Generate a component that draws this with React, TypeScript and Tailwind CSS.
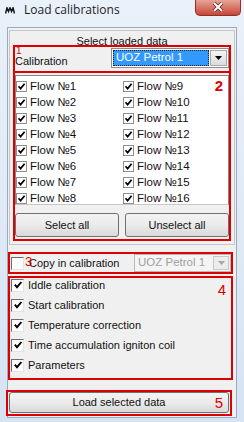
import React from "react";

const flowsLeft = ["Flow №1", "Flow №2", "Flow №3", "Flow №4", "Flow №5", "Flow №6", "Flow №7", "Flow №8"];
const flowsRight = ["Flow №9", "Flow №10", "Flow №11", "Flow №12", "Flow №13", "Flow №14", "Flow №15", "Flow №16"];
const dataItems = [
  "Iddle calibration",
  "Start calibration",
  "Temperature correction",
  "Time accumulation igniton coil",
  "Parameters",
];

// small flat checkbox used in the white list
function ListCheck({ label }: { label: string }) {
  return (
    <div className="flex h-4 items-center">
      <span className="flex h-[11px] w-[11px] items-center justify-center border border-[#8e8f8f] bg-white">
        <svg width="9" height="9" viewBox="0 0 9 9">
          <path d="M1.5 4.3 L3.6 6.6 L7.6 1.8" stroke="#000" strokeWidth="1.7" fill="none" />
        </svg>
      </span>
      <span className="ml-[3px] text-[11.5px] leading-4 text-[#111]">{label}</span>
    </div>
  );
}

// old style sunken checkbox
function OldCheck({ checked }: { checked: boolean }) {
  return (
    <span className="flex h-[13px] w-[13px] items-center justify-center border border-t-[#6d6d6d] border-l-[#6d6d6d] border-b-[#e3e3e3] border-r-[#e3e3e3] bg-white">
      {checked && (
        <svg width="10" height="10" viewBox="0 0 10 10">
          <path d="M1.8 4.6 L4 7.2 L8.4 2" stroke="#000" strokeWidth="1.9" fill="none" />
        </svg>
      )}
    </span>
  );
}

function WinButton({ children, className = "" }: { children: React.ReactNode; className?: string }) {
  return (
    <div
      className={
        "flex items-center justify-center rounded-[3px] border border-[#707070] bg-linear-to-b from-[#f3f3f3] via-[#ebebeb] to-[#d9d9d9] text-[11px] text-[#111] " +
        className
      }
    >
      {children}
    </div>
  );
}

function Badge({ n, className }: { n: string; className: string }) {
  return <span className={"absolute text-[#dd0000] " + className}>{n}</span>;
}

export default function App() {
  return (
    <div className="flex h-[422px] w-[244px] flex-col overflow-hidden bg-linear-to-b from-[#e9f1fa] to-[#d6e3f2] font-['Liberation_Sans',Arial,sans-serif]">
      {/* title bar */}
      <div className="flex h-[27px] items-start">
        <svg className="ml-[5px] mt-[7px]" width="10" height="7" viewBox="0 0 10 7">
          <path d="M0.5 6.5 L2 0.8 L3.5 4.5 L5 0.8 L6.5 4.5 L8 0.8 L9.5 6.5" stroke="#1a1a1a" strokeWidth="1.5" fill="none" />
        </svg>
        <span className="ml-[9px] mt-[2px] font-['Open_Sans',sans-serif] text-[12px] leading-4 text-[#1e1e1e]">
          Load calibrations
        </span>
        <div className="flex-1" />
        <div className="mr-[3px] -mt-[1px] flex h-[17px] w-[46px] items-center justify-center rounded-b-[5px] border border-t-0 border-[#8a3030] bg-linear-to-b from-[#e9a99c] via-[#d8786a] to-[#c74535]">
          <svg width="12" height="10" viewBox="0 0 12 10">
            <path d="M2 1 L10 9 M10 1 L2 9" stroke="#5a1e1e" strokeWidth="3.4" />
            <path d="M2 1 L10 9 M10 1 L2 9" stroke="#fff" strokeWidth="2" />
          </svg>
        </div>
      </div>

      {/* client area */}
      <div className="ml-[7px] flex h-[391px] w-[230px] flex-col border border-[#9aabbf] bg-[#f0f0f0]">
        {/* select loaded data panel */}
        <div className="ml-px mt-[2px] flex w-[226px] flex-col border border-[#c6c6c6] pb-[3px]">
          <div className="mt-[4px] text-center text-[11px] leading-[12px] text-[#111]">Select loaded data</div>

          <div className="relative -mt-[2px] ml-[3px] flex h-[28px] w-[218px] items-start border-2 border-[#dd0000]">
            <Badge n="1" className="left-[1px] -top-[1px] text-[10px] leading-[10px]" />
            <span className="mt-[7px] text-[11px] leading-[14px] text-[#111]">Calibration</span>
            <div className="flex-1" />
            <div className="mt-[1px] flex h-[20px] w-[118px] items-center border border-[#8c8c8c] bg-white p-px">
              <div className="flex h-full flex-1 items-center border border-dotted border-[#222] bg-[#3399ff] pl-[2px] text-[11.5px] text-white">
                UOZ Petrol 1
              </div>
              <div className="ml-px flex h-full w-[17px] items-center justify-center border border-[#a8a8a8] bg-linear-to-b from-[#f4f4f4] to-[#dcdcdc]">
                <svg width="7" height="4" viewBox="0 0 7 4">
                  <path d="M0 0 H7 L3.5 4 Z" fill="#000" />
                </svg>
              </div>
            </div>
          </div>

          <div className="relative -mt-[2px] ml-[3px] flex w-[218px] flex-col border-2 border-[#dd0000] pb-[2px]">
            <Badge n="2" className="right-[6px] top-[5px] text-[15px] font-bold leading-[15px]" />
            <div className="mt-[2px] grid h-[130px] grid-cols-[107px_1fr] content-start border border-[#828790] border-b-[#c8c8c8] bg-white pt-[2px]">
              <div className="flex flex-col">
                {flowsLeft.map((f) => (
                  <ListCheck key={f} label={f} />
                ))}
              </div>
              <div className="flex flex-col">
                {flowsRight.map((f) => (
                  <ListCheck key={f} label={f} />
                ))}
              </div>
            </div>
            <div className="mt-[8px] grid grid-cols-2 gap-[6px]">
              <WinButton className="h-[24px]">Select all</WinButton>
              <WinButton className="h-[24px]">Unselect all</WinButton>
            </div>
          </div>
        </div>

        {/* copy in calibration */}
        <div className="relative mt-[7px] flex h-[22px] w-[225px] items-center border-2 border-[#dd0000]">
          <span className="ml-[1px]">
            <OldCheck checked={false} />
          </span>
          <span className="ml-[5px] text-[11px] text-[#111]">Copy in calibration</span>
          <Badge n="3" className="left-[15px] top-[1px] text-[13px] leading-[13px]" />
          <div className="flex-1" />
          <div className="flex h-[18px] w-[97px] items-center border border-[#b8b8b8] bg-[#f4f4f4] p-px">
            <div className="flex-1 pl-[2px] text-[11.5px] text-[#a0a0a0]">UOZ Petrol 1</div>
            <div className="flex h-full w-[16px] items-center justify-center border border-[#c8c8c8] bg-[#ececec]">
              <svg width="7" height="4" viewBox="0 0 7 4">
                <path d="M0 0 H7 L3.5 4 Z" fill="#a6a6a6" />
              </svg>
            </div>
          </div>
        </div>

        {/* data items */}
        <div className="relative mt-[2px] flex w-[225px] flex-col gap-[6px] border-2 border-[#dd0000] pb-[6px]">
          <Badge n="4" className="right-[5px] top-[4px] text-[15px] leading-[15px]" />
          {dataItems.map((d) => (
            <div key={d} className="flex h-[14px] items-center">
              <span className="ml-px">
                <OldCheck checked />
              </span>
              <span className="ml-[4px] text-[11px] text-[#111]">{d}</span>
            </div>
          ))}
        </div>

        {/* load button */}
        <div className="relative -ml-[2px] mt-[10px] flex h-[26px] w-[226px] border-2 border-[#dd0000] px-px">
          <Badge n="5" className="right-[7px] top-[3px] text-[15px] leading-[15px]" />
          <WinButton className="h-[21px] w-full">Load selected data</WinButton>
        </div>
      </div>
    </div>
  );
}
